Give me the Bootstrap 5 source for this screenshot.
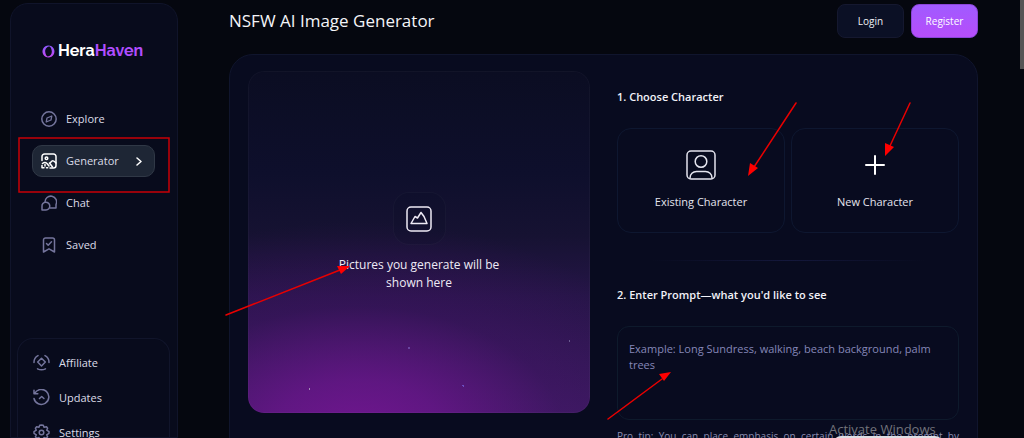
<!DOCTYPE html>
<html lang="en" data-bs-theme="dark">
<head>
<meta charset="utf-8">
<meta name="viewport" content="width=device-width, initial-scale=1">
<title>HeraHaven</title>
<link href="https://cdn.jsdelivr.net/npm/bootstrap@5.3.0/dist/css/bootstrap.min.css" rel="stylesheet">
<script src="https://cdn.jsdelivr.net/npm/bootstrap@5.3.0/dist/js/bootstrap.bundle.min.js" defer></script>
<style>
  body { font-family: "Open Sans", "Noto Sans", sans-serif; font-size: 11px; line-height: 16px; background: #05070f; color: #e4e4ee; }
  svg { fill: none; stroke: currentColor; stroke-width: 1.5; stroke-linecap: round; stroke-linejoin: round; flex-shrink: 0; }
  .side-panel { width: 168px; margin: 3px 0 0 10px; background: #080b1c; border: 1px solid #10142a; border-radius: 18px 18px 0 0; }
  .brand { font: 700 16px/20px "Raleway", "Lato", sans-serif; margin: 37px 0 42px; padding-left: 31px; gap: 3px; }
  .brand-alt { color: #b04dff; }
  .side-nav { padding: 0 22px 0 21px; gap: 10px; }
  .side-link { height: 32px; padding: 0 8px; gap: 9px; border: 1px solid transparent; border-radius: 10px; color: #dcdce8; }
  .side-link svg, .foot-link svg { color: #74759c; }
  .side-link.active { background: #1e2635; border-color: #303846; }
  .side-link.active svg { color: #fff; }
  .foot-nav { margin: auto 7px 0 6px; padding: 6px 15px 0; height: 99px; border: 1px solid #11152b; border-bottom: 0; border-radius: 16px 16px 0 0; }
  .foot-link { height: 35px; flex-shrink: 0; gap: 9px; color: #dcdce8; }
  .main-area { padding: 4px 46px 0 51px; }
  .top-bar { gap: 7px; }
  .page-title { font-size: 17px; line-height: 24px; color: #f4f4f8; }
  .btn-top { height: 34px; min-width: 67px; padding: 0 8px; font-size: 10px; line-height: 16px; border-radius: 8px; }
  .btn-login { background: #0b1025; border-color: #15182f; color: #f0f0f5; }
  .btn-register { background: linear-gradient(#a05bff, #b74dfa); border-color: #8a45d8; color: #fff; }
  .work-card { margin-top: 16px; padding: 16px 18px 0; gap: 27px; background: #080b1f; border: 1px solid #10152d; border-radius: 24px 24px 0 0; }
  .half { flex: 1 1 0; min-width: 0; }
  .preview {
    aspect-ratio: 1; padding: 0 80px; border-radius: 16px; font-size: 12px; line-height: 18px; color: #eeeaf5; box-shadow: inset 0 0 0 1px #ffffff08;
    background:
      radial-gradient(circle at 18% 93%, #a58bb8 0 1px, transparent 1px),
      radial-gradient(circle at 47% 81%, #6a45a0 0 1px, transparent 1px),
      radial-gradient(circle at 63% 92%, #6c4ec0 0 1px, transparent 1px),
      radial-gradient(circle at 94% 79%, #6a5a90 0 1px, transparent 1px),
      radial-gradient(ellipse 100% 62% at 32% 106%, #70168f 0%, #6a168ccc 25%, #5212764d 60%, transparent 100%),
      linear-gradient(#0b0d22 0%, #0e0f2c 30%, #161232 48%, #251547 66%, #371a5c 100%);
  }
  .preview-icon { width: 53px; height: 53px; margin-bottom: 11px; border: 1px solid #ffffff08; border-radius: 16px; background: #0a0c2426; }
  .choose-step { padding-top: 18px; }
  .step-title { font-size: 11px; line-height: 16px; font-weight: 600; margin: 0 0 23px; color: #f2f2f8; }
  .choices { --bs-gutter-x: 6px; }
  .choice { height: 105px; padding: 0 0 2px; gap: 14px; font-size: 11px; line-height: 16px; border: 1px solid #0e1730; border-radius: 14px; color: #e4e4ee; }
  .choice:hover { border-color: #24305a; color: #fff; }
  .divider { height: 1px; margin: 27px 0 26px; background: linear-gradient(90deg, transparent 10%, #14183c 50%, transparent 90%); }
  .prompt-box, .prompt-box:focus { height: 94px; padding: 14px 11px; font-size: 11px; line-height: 16px; background: #080b1f; border: 1px solid #0e1a2c; border-radius: 12px; resize: none; }
  .prompt-box::placeholder { color: #8587b8; opacity: 1; }
  .pro-tip { font-size: 10px; line-height: 16px; text-align: justify; color: #8b8caf; margin-top: 8px; }
  .scroll-thumb { top: 0; right: 0; width: 4px; height: 69px; background: #555; }
  .watermark { left: 829px; top: 420px; font: 13px/18px "Open Sans", sans-serif; color: #73747c; }
  .share-pill { left: 833px; top: 436px; width: 110px; height: 30px; border-radius: 8px; background: #dedee4; }
  .markup { inset: 0; pointer-events: none; }
</style>
</head>
<body>
<div class="d-flex vh-100 overflow-hidden position-relative">
  <aside class="side-panel d-flex flex-column flex-shrink-0">
    <a href="#" class="brand d-flex align-items-center text-white text-decoration-none">
      <svg width="13" height="13" viewBox="0 0 13 13" aria-hidden="true"><defs><linearGradient id="ring" x1="0" y1="0" x2="0" y2="1"><stop stop-color="#8c5cff"/><stop offset="1" stop-color="#c548f0"/></linearGradient></defs><path fill="url(#ring)" fill-rule="evenodd" stroke="none" d="M6.500 .5A6 6 0 1 1 6.400 .5ZM7.800 1.500C5 1.500 3 3.800 3.200 6.800 3.400 9.500 4.600 11 5.600 11.500 8.500 11.300 10 9 9.800 6.300 9.600 3.500 8.500 2.200 7.800 1.500Z"/></svg>
      <span>Hera<span class="brand-alt">Haven</span></span>
    </a>
    <nav class="side-nav d-flex flex-column">
      <a href="#" class="side-link d-flex align-items-center text-decoration-none">
        <svg width="16" height="16" viewBox="0 0 16 16"><circle cx="8" cy="8" r="7.200"/><path stroke-width="1.300" d="M10.800 5 10 9 5.200 11 6 7Z"/></svg>Explore</a>
      <a href="#" class="side-link active d-flex align-items-center text-decoration-none" aria-current="page">
        <svg width="16" height="16" viewBox="0 0 16 16" stroke-width="1.300"><path d="M1 7.500V3.500A2.500 2.500 0 0 1 3.500 1h9A2.500 2.500 0 0 1 15 3.500v9a2.500 2.500 0 0 1-2.500 2.500H9"/><circle cx="5.500" cy="5.200" r="1.300"/><path d="M1.500 10.500Q4 8.500 6 10.500L8 13M8.500 10.500 11 8q1.500-1 4 2M11.500 14l-3-4"/><path d="M1 12.500v2.300h2M5.500 14.800h1.200M4 11.500v1.500"/></svg>Generator
        <svg class="ms-auto me-1" width="6" height="9" viewBox="0 0 6 9"><path d="m1 1 4 3.500L1 8"/></svg></a>
      <a href="#" class="side-link d-flex align-items-center text-decoration-none">
        <svg width="16" height="16" viewBox="0 0 16 16"><path d="M4 7.200A5.800 5.800 0 1 1 15 9.500V13H9"/><path d="M1 15v-3.500A3.900 3.900 0 1 1 5 15Z"/></svg>Chat</a>
      <a href="#" class="side-link d-flex align-items-center text-decoration-none">
        <svg width="16" height="16" viewBox="0 0 16 16"><path d="M2.500 15V3A2 2 0 0 1 4.500 1h7a2 2 0 0 1 2 2v12L8 11.800Z"/><path d="m5.500 6.500 1.700 1.700 3.300-3.400"/></svg>Saved</a>
    </nav>
    <nav class="foot-nav d-flex flex-column">
      <a href="#" class="foot-link d-flex align-items-center text-decoration-none">
        <svg width="17" height="17" viewBox="0 0 17 17"><path d="M8.500 4.200 12.300 8 8.500 11.900 4.700 8ZM1 8.500A7.500 7.500 0 0 1 5 1.600M12 1.600a7.500 7.500 0 0 1 4 6.900M4.500 14.800q4 2 8 0"/></svg>Affiliate</a>
      <a href="#" class="foot-link d-flex align-items-center text-decoration-none">
        <svg width="17" height="17" viewBox="0 0 17 17"><path d="M1 1.200v3.600h3.800M1.500 4.800A7.500 7.500 0 1 1 1 9.500M6.500 9.500l2.200-2 2.200 2"/></svg>Updates</a>
      <a href="#" class="foot-link d-flex align-items-center text-decoration-none">
        <svg width="17" height="17" viewBox="0 0 17 17"><circle cx="8.500" cy="8.500" r="2.300"/><path d="M8.500 1 10.300 1.300 11 3.200 13.500 2.800 14.600 4.200 13.700 6.200 16 7.700V9.300L13.700 10.800 14.600 12.800 13.300 14.200 11 13.600 10 15.900H7L6 13.600 3.700 14.200 2.400 12.800 3.300 10.800 1 9.300V7.700L3.300 6.200 2.400 4.200 3.600 2.800 6 3.200 6.700 1.300Z"/></svg>Settings</a>
    </nav>
  </aside>

  <main class="main-area flex-fill d-flex flex-column">
    <header class="top-bar d-flex align-items-center">
      <h1 class="page-title fw-normal m-0 me-auto">NSFW AI Image Generator</h1>
      <button type="button" class="btn btn-top btn-login">Login</button>
      <button type="button" class="btn btn-top btn-register">Register</button>
    </header>
    <section class="work-card d-flex align-items-start flex-fill">
      <div class="half">
        <div class="preview d-flex flex-column align-items-center justify-content-center text-center">
          <div class="preview-icon d-flex align-items-center justify-content-center">
            <svg width="26" height="26" viewBox="0 0 26 26"><rect x="1" y="1" width="24" height="24" rx="4"/><path d="M5 17.500 9 10.500l2.500 1.500L15 6.500l3 4 3 7Z"/></svg>
          </div>
          <p class="m-0">Pictures you generate will be shown here</p>
        </div>
      </div>
      <form class="half choose-step">
        <h2 class="step-title">1. Choose Character</h2>
        <div class="row choices">
          <div class="col">
            <button type="button" class="btn choice w-100 d-flex flex-column align-items-center justify-content-center">
              <svg width="30" height="30" viewBox="0 0 30 30"><rect x="1" y="1" width="28" height="28" rx="4"/><circle cx="15" cy="11.500" r="5.800"/><path d="M4 28c0-4 3-6.500 6.500-6.500h9c3.500 0 6.500 2.500 6.500 6.500"/></svg>
              Existing Character</button>
          </div>
          <div class="col">
            <button type="button" class="btn choice w-100 d-flex flex-column align-items-center justify-content-center">
              <svg width="30" height="30" viewBox="0 0 30 30"><path stroke="#fff" stroke-width="2" d="M15 6v18M6 15h18"/></svg>
              New Character</button>
          </div>
        </div>
        <div class="divider"></div>
        <label for="prompt" class="step-title d-block">2. Enter Prompt—what you'd like to see</label>
        <textarea id="prompt" class="prompt-box form-control" placeholder="Example: Long Sundress, walking, beach background, palm trees"></textarea>
        <p class="pro-tip">Pro tip: You can place emphasis on certain words in the prompt by wrapping them in parentheses.</p>
      </form>
    </section>
  </main>

  <div class="scroll-thumb position-absolute"></div>
  <div class="share-pill position-absolute"></div>
  <div class="watermark position-absolute">Activate Windows</div>
  <svg class="markup position-absolute" width="1024" height="438" viewBox="0 0 1024 438" aria-hidden="true">
    <rect x="19" y="138" width="150" height="54" stroke="#c80006" stroke-linejoin="miter"/>
    <g stroke="#e80000"><path d="M796 103 754 167M910 103 889 148M226 315 340 270M608 419 662 379"/></g>
    <g fill="#f00" stroke="none"><path d="m748 176 2-13 8 5ZM885 156v-13l9 4ZM350 266l-9 8-4-8ZM671 372l-7 9-5-7Z"/></g>
  </svg>
</div>
</body>
</html>
